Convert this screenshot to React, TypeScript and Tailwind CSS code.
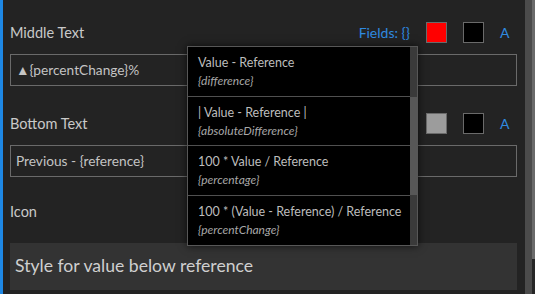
import React from 'react';

const font = { fontFamily: 'Lato, "Noto Sans", sans-serif' };

interface FieldOption {
    readonly label: string;
    readonly token: string;
}

const options: FieldOption[] = [
    { label: 'Value - Reference', token: '{difference}' },
    { label: '| Value - Reference |', token: '{absoluteDifference}' },
    { label: '100 * Value / Reference', token: '{percentage}' },
    { label: '100 * (Value - Reference) / Reference', token: '{percentChange}' },
];

function Swatch({ color }: { readonly color: string }) {
    return <div className={`w-[21px] h-[21px] border border-[#6a6a6a] ${color}`} />;
}

function LabelRow({ label, swatch, fields }: { readonly label: string; readonly swatch: string; readonly fields?: boolean }) {
    return (
        <div className="flex items-center h-[21px]">
            <span className="flex-1 text-[14.5px] text-[#c9c9c9]">{label}</span>
            {fields && <span className="text-[14px] text-[#2f8ae0] mr-[16px]">Fields: {'{}'}</span>}
            <Swatch color={swatch} />
            <div className="w-[16px]" />
            <Swatch color="bg-black" />
            <span className="w-[33px] pl-[16px] text-[14px] text-[#2f8ae0]">A</span>
        </div>
    );
}

function TextInput({ value }: { readonly value: string }) {
    return (
        <div className="h-[32px] border border-[#6a6a6a] flex items-center px-[5px] text-[13.7px] text-[#c4c4c4]">
            {value}
        </div>
    );
}

function FieldMenu() {
    return (
        <div className="absolute left-[187px] top-[46px] w-[231px] h-[200px] bg-black border border-[#575757] shadow-[0_0_8px_rgba(0,0,0,0.7)] flex">
            <div className="flex-1 flex flex-col">
                {options.map((o, i) => (
                    <div
                        key={o.token}
                        className={`h-[50px] flex flex-col justify-center pl-[10px] pt-[2px] ${i < options.length - 1 ? 'border-b border-[#505050]' : ''}`}
                    >
                        <span className="text-[12.5px] leading-[18px] text-[#bdbdbd]">{o.label}</span>
                        <span className="text-[12px] leading-[18px] italic text-[#a8a8a8]">{o.token}</span>
                    </div>
                ))}
            </div>
            <div className="w-[7px] flex flex-col bg-[#3a3a3a]">
                <div className="h-[50px]" />
                <div className="h-[98px] bg-[#575757]" />
            </div>
        </div>
    );
}

export default function App() {
    return (
        <div className="relative w-[535px] h-[294px] bg-[#232323] flex overflow-hidden" style={font}>
            <div className="w-[3px] bg-[#1e88e5]" />
            <div className="flex-1 flex flex-col pl-[7px] pr-[8px] pt-[22px]">
                <LabelRow label="Middle Text" swatch="bg-[#ff0000]" fields />
                <div className="mt-[11px]">
                    <TextInput value="▲{percentChange}%" />
                </div>
                <div className="mt-[27px]">
                    <LabelRow label="Bottom Text" swatch="bg-[#9c9c9c]" />
                </div>
                <div className="mt-[11px]">
                    <TextInput value="Previous - {reference}" />
                </div>
                <div className="mt-[25px] h-[20px] flex items-center text-[14.5px] text-[#c9c9c9]">Icon</div>
                <div className="mt-[21px] h-[47px] bg-[#333333] flex items-center px-[5px] text-[17.6px] text-[#cfcfcf]">
                    Style for value below reference
                </div>
            </div>
            <div className="w-[7px] bg-[#4b4b4b]" />
            <div className="w-[3px] flex flex-col">
                <div className="h-[259px] bg-[#6a6a6a]" />
                <div className="flex-1 bg-[#262626]" />
            </div>
            <FieldMenu />
        </div>
    );
}
